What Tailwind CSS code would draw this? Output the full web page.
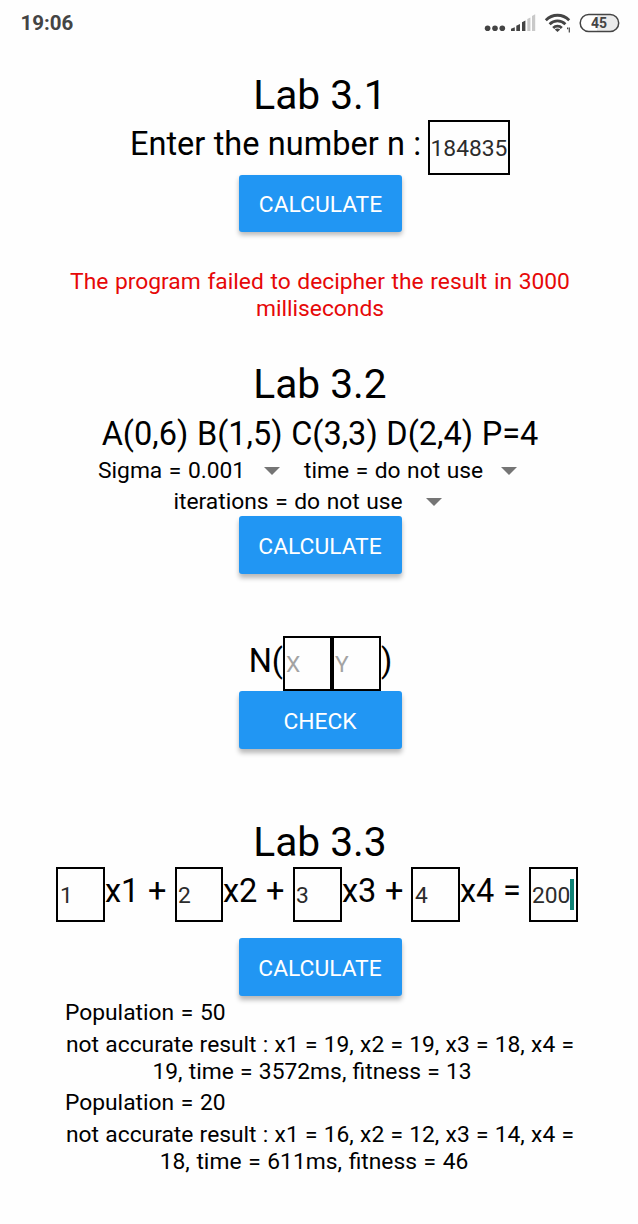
<!DOCTYPE html>
<html lang="en">
<head>
<meta charset="utf-8">
<title>Lab 3</title>
<script src="https://cdn.jsdelivr.net/npm/@tailwindcss/browser@4"></script>
</head>
<body class="bg-[#fefefe]">
<div class="w-[638px] h-[1224px] overflow-hidden flex flex-col text-black font-['Roboto',sans-serif] whitespace-nowrap">

  <header class="h-[47px] shrink-0 flex items-center justify-between pl-[20.5px] pr-[17px] text-[#444]">
    <span class="text-[20.5px] leading-[23px] font-bold">19:06</span>
    <svg class="w-[138px] h-[47px]" viewBox="0 0 138 47" fill="none">
      <g fill="#444">
        <circle cx="4.600" cy="28.200" r="2.800"/><circle cx="12" cy="28.200" r="2.800"/><circle cx="19.300" cy="28.200" r="2.800"/>
        <path d="M28 31v-2.200l3.800-1.500V31zM33.300 31v-5.300l3.700-1.800V31zM39 31v-8.800l3.400-1.800V31z"/>
      </g>
      <path d="M44.300 31V19l3.100-1.500V31zM49 31V16l3.200-1.800V31z" fill="#c9c9c9"/>
      <g stroke="#444" stroke-width="2.800">
        <path d="M62.800 20.200C69.500 13.600 79.500 13.600 86.200 20.200"/>
        <path d="M66.600 24.200C71.100 19.800 77.900 19.800 82.400 24.200"/>
        <path d="M70.200 27.900C72.600 25.500 76.400 25.500 78.800 27.900"/>
      </g>
      <path d="M71.800 29.400C73.200 28.100 75.800 28.100 77.200 29.400L74.500 32z" fill="#444"/>
      <path d="M84.600 27.500v1.800M86.300 27.500v5" stroke="#444" stroke-width="1.200"/>
      <rect x="97.200" y="14.500" width="38.500" height="17" rx="8.500" fill="#fff"/>
      <path d="M114 14.500h13.200a8.500 8.500 0 0 1 0 17H114z" fill="#ebebeb"/>
      <rect x="97.200" y="14.500" width="38.500" height="17" rx="8.500" stroke="#444" stroke-width="1.500"/>
      <text x="108" y="28" textLength="16" lengthAdjust="spacingAndGlyphs" font-family="Roboto" font-weight="700" font-size="14.500" fill="#444">45</text>
    </svg>
  </header>

  <main class="flex flex-col items-center w-[638px] pl-[2px] text-[22.800px] leading-[27px]">

    <section class="mt-[24px] flex flex-col items-center">
      <h1 class="text-[40.700px] leading-[48px]">Lab 3.1</h1>
      <div class="mt-[1px] w-[380px] h-[55px] flex items-start justify-between">
        <span class="mt-[5px] text-[32.500px] leading-[38px] [word-spacing:0.3px]">Enter the number n :</span>
        <div class="w-[82px] h-[55px] border-2 border-black pt-[13px] flex justify-center text-[#2c2c2c]">184835</div>
      </div>
      <button class="ml-px w-[163px] h-[57px] pt-[2px] rounded-[3px] bg-[#2196f3] text-white shadow-[0_3px_5px_rgba(0,0,0,0.28)]">CALCULATE</button>
    </section>

    <p class="mt-[36px] h-[54px] text-center text-[#e60808] [word-spacing:1px]">The program failed to decipher the result in 3000<br>milliseconds</p>

    <section class="mt-[38px] flex flex-col items-center">
      <h1 class="text-[40.700px] leading-[48px]">Lab 3.2</h1>
      <p class="mt-[7px] text-[32.500px] leading-[38px] [word-spacing:0.600px]">A(0,6) B(1,5) C(3,3) D(2,4) P=4</p>
      <div class="mt-[4px] w-[444px] h-[27px] flex items-center [word-spacing:0.900px]">
        <span class="w-[166px]">Sigma = 0.001</span>
        <svg class="w-[16px] h-[8px] mr-[24px]" viewBox="0 0 16 8"><path d="M0 0h16L8 8z" fill="#757575"/></svg>
        <span class="w-[197px]">time = do not use</span>
        <svg class="w-[16px] h-[8px]" viewBox="0 0 16 8"><path d="M0 0h16L8 8z" fill="#757575"/></svg>
      </div>
      <div class="mt-[4px] w-[293px] h-[27px] flex items-center [word-spacing:0.900px]">
        <span class="w-[252px]">iterations = do not use</span>
        <svg class="w-[16px] h-[8px]" viewBox="0 0 16 8"><path d="M0 0h16L8 8z" fill="#757575"/></svg>
      </div>
      <button class="mt-[1px] w-[163px] h-[58px] pt-[2px] rounded-[3px] bg-[#2196f3] text-white shadow-[0_4px_5px_rgba(0,0,0,0.28)]">CALCULATE</button>

      <div class="mt-[62px] ml-px h-[55px] flex items-start text-[32.500px] leading-[38px]">
        <span class="mt-[6px]">N(</span>
        <div class="w-[49px] h-[55px] border-2 border-black pt-[13px] pl-px text-[22.800px] leading-[27px] text-[#a3a3a3]">X</div>
        <div class="w-[49px] h-[55px] border-2 border-black pt-[13px] pl-px text-[22.800px] leading-[27px] text-[#a3a3a3]">Y</div>
        <span class="mt-[6px]">)</span>
      </div>
      <button class="w-[163px] h-[58px] pt-[2px] rounded-[3px] bg-[#2196f3] text-white shadow-[0_4px_5px_rgba(0,0,0,0.28)]">CHECK</button>
    </section>

    <section class="mt-[69px] flex flex-col items-center">
      <h1 class="text-[40.700px] leading-[48px]">Lab 3.3</h1>
      <div class="mt-[1px] w-[528px] h-[55px] flex items-start text-[32.500px] leading-[38px] [word-spacing:0.500px]">
        <div class="shrink-0 w-[49px] h-[55px] border-2 border-black pt-[13px] pl-[2px] text-[22.800px] leading-[27px] text-[#2c2c2c]">1</div>
        <span class="shrink-0 mt-[5px] w-[70px]">x1 +</span>
        <div class="shrink-0 w-[48px] h-[55px] border-2 border-black pt-[13px] pl-[1px] text-[22.800px] leading-[27px] text-[#2c2c2c]">2</div>
        <span class="shrink-0 mt-[5px] w-[70px]">x2 +</span>
        <div class="shrink-0 w-[49px] h-[55px] border-2 border-black pt-[13px] pl-[1px] text-[22.800px] leading-[27px] text-[#2c2c2c]">3</div>
        <span class="shrink-0 mt-[5px] w-[69px]">x3 +</span>
        <div class="shrink-0 w-[49px] h-[55px] border-2 border-black pt-[13px] pl-[2px] text-[22.800px] leading-[27px] text-[#2c2c2c]">4</div>
        <span class="shrink-0 mt-[5px] w-[69px]">x4 =</span>
        <div class="shrink-0 w-[49px] h-[55px] border-2 border-black pt-[10px] pl-[1px] flex text-[22.800px] leading-[27px] text-[#2c2c2c]"><span class="shrink-0 mt-[3px] w-[38px]">200</span><i class="shrink-0 w-[4px] h-[31px] bg-[#0f8376]"></i></div>
      </div>
      <button class="mt-[16px] w-[163px] h-[58px] pt-[2px] rounded-[3px] bg-[#2196f3] text-white shadow-[0_4px_5px_rgba(0,0,0,0.28)]">CALCULATE</button>

      <div class="mt-[3px] w-[510px] flex flex-col">
        <p class="[word-spacing:1px]">Population = 50</p>
        <p class="mt-[5px] text-center [word-spacing:0.600px]">not accurate result : x1 = 19, x2 = 19, x3 = 18, x4 =<br><span class="mr-[16px]">19, time = 3572ms, fitness = 13</span></p>
        <p class="mt-[4px] [word-spacing:1px]">Population = 20</p>
        <p class="mt-[5px] text-center [word-spacing:0.600px]">not accurate result : x1 = 16, x2 = 12, x3 = 14, x4 =<br><span class="mr-[12px] [word-spacing:1px]">18, time = 611ms, fitness = 46</span></p>
      </div>
    </section>
  </main>
</div>
</body>
</html>
